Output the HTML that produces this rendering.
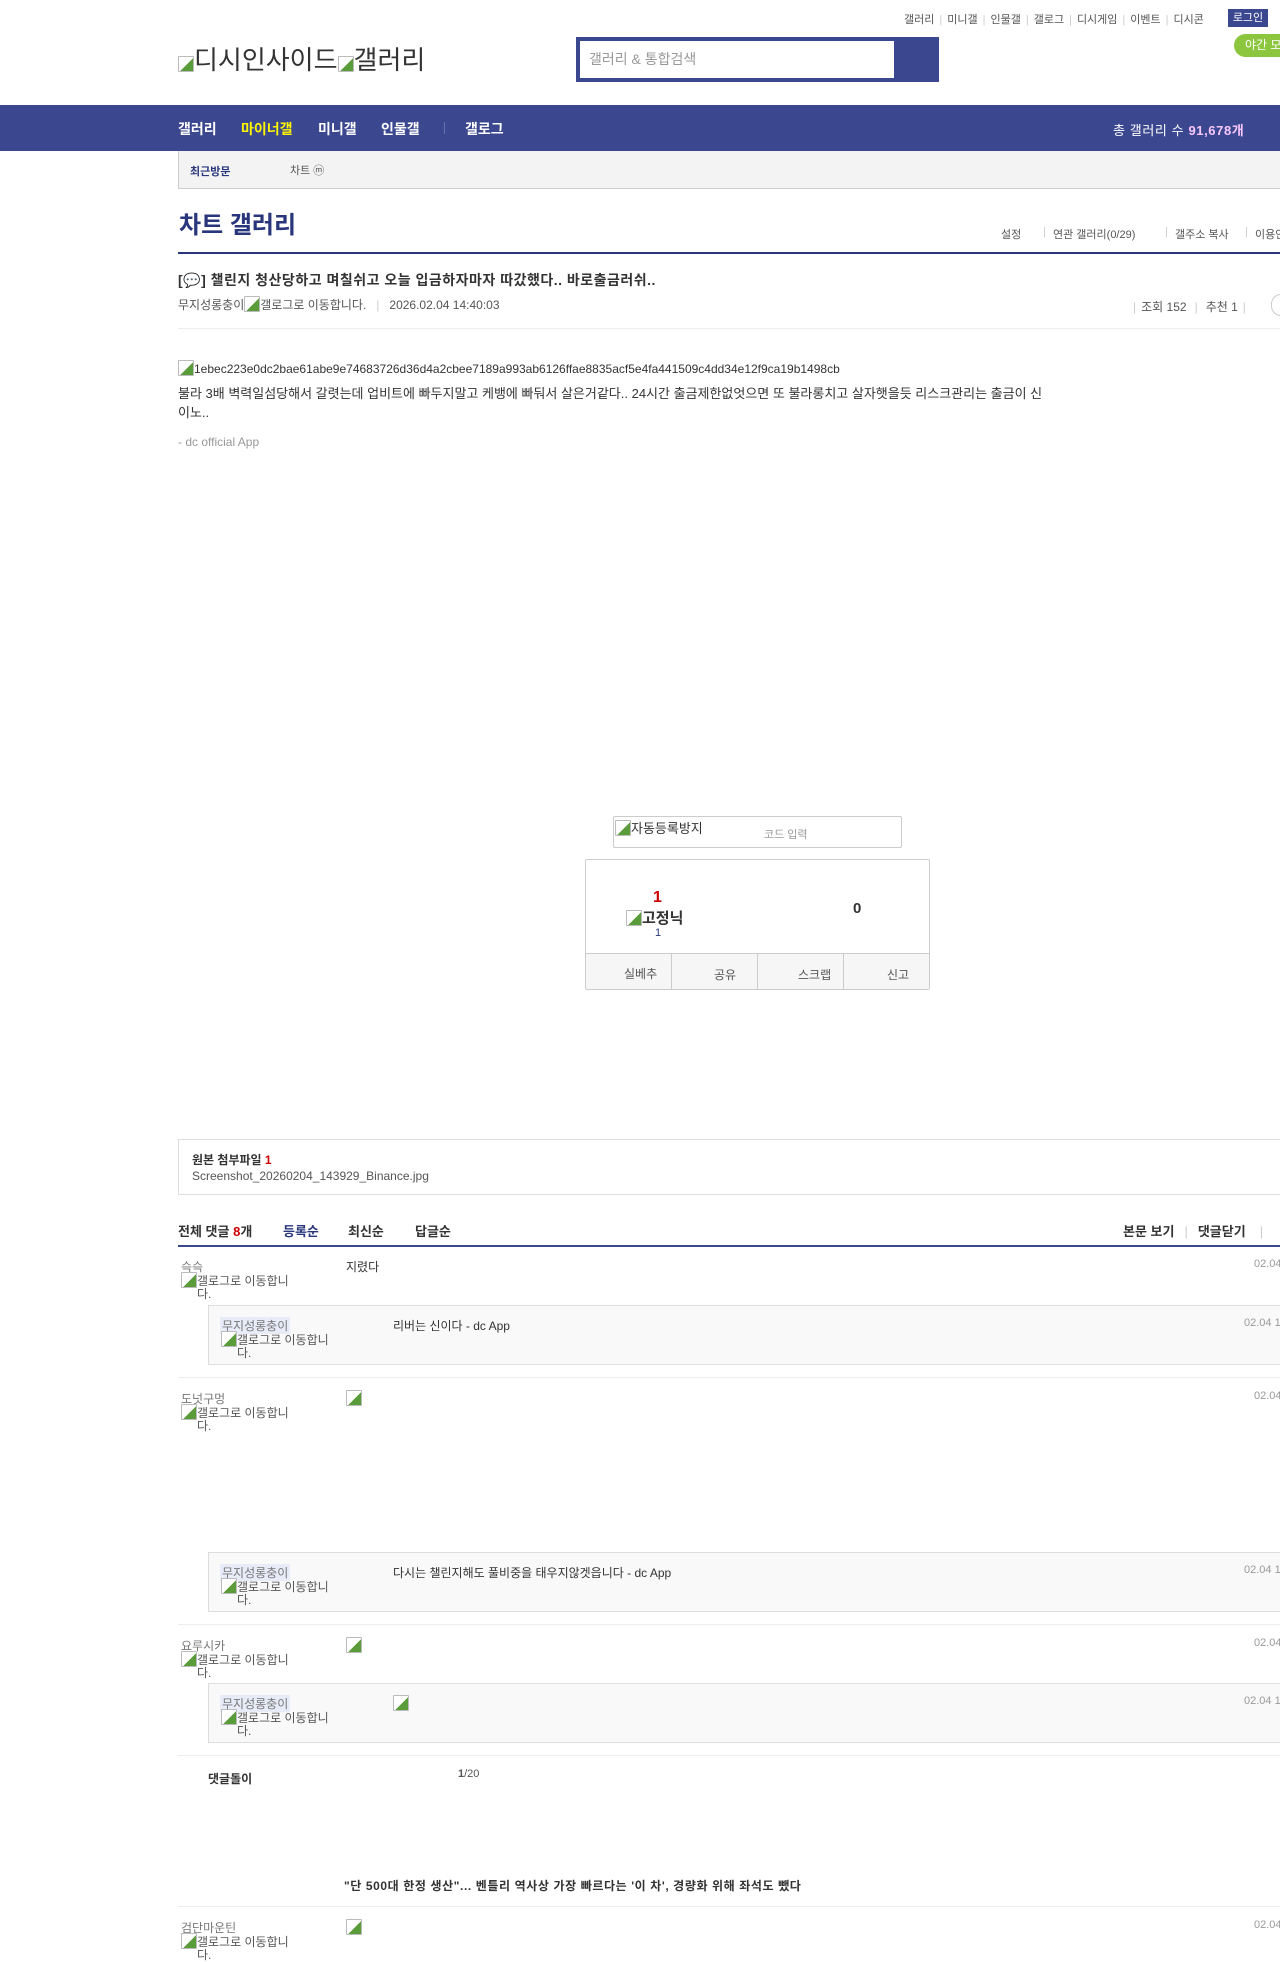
<!DOCTYPE html>
<html><head><meta charset="utf-8">
<style>
*{margin:0;padding:0;box-sizing:border-box}
body{width:1280px;height:1957px;position:relative;overflow:hidden;background:#fff;font-family:"Liberation Sans","Noto Sans CJK KR",sans-serif;color:#333;font-size:12px}
.a{position:absolute;white-space:nowrap}
.tl span.s{color:#ccc;margin:0 5px}
.rep{position:absolute;left:208px;width:1100px;background:#f9f9f9;border:1px solid #ddd}
.hr{position:absolute;left:178px;width:1110px;height:1px;background:#eee}
.nick{color:#777;font-size:12px}
.nick2{color:#777;background:#e8ecf8;font-size:12px;padding:0 2px}
.gl{font-size:12px;color:#555;line-height:13px;width:112px;white-space:normal;word-break:break-all;padding-left:16px;text-indent:-16px}
.bi{display:inline-block;width:16px;height:16px;border:1px solid #bbb;border-radius:1px;vertical-align:-3px;background:linear-gradient(135deg,#fff 55%,#5a9c3a 55%)}
</style></head><body>

<div class="a tl" style="left:904px;top:11px;font-size:11px;color:#555">갤러리<span class="s">|</span>미니갤<span class="s">|</span>인물갤<span class="s">|</span>갤로그<span class="s">|</span>디시게임<span class="s">|</span>이벤트<span class="s">|</span>디시콘</div>
<div class="a" style="left:1228px;top:9px;width:40px;height:18px;background:#3b4890;color:#fff;font-size:11px;line-height:18px;text-align:center">로그인</div>
<div class="a" style="left:1234px;top:34px;width:60px;height:23px;background:#8cc63e;color:#fff;border-radius:12px;font-size:12px;line-height:23px;padding-left:11px">야간 모드</div>

<div class="a" style="left:178px;top:40px;font-size:26px;color:#333"><span class="bi"></span>디시인사이드<span class="bi"></span>갤러리</div>

<div class="a" style="left:576px;top:37px;width:363px;height:45px;background:#3b4890"></div>
<div class="a" style="left:580px;top:41px;width:314px;height:37px;background:#fff;color:#999;font-size:14px;line-height:37px;padding-left:9px">갤러리 &amp; 통합검색</div>

<div class="a" style="left:0;top:105px;width:1280px;height:46px;background:#3b4890"></div>
<div class="a" style="left:178px;top:119px;font-size:14px;font-weight:bold;color:#fff">갤러리</div>
<div class="a" style="left:241px;top:119px;font-size:14px;font-weight:bold;color:#fef500">마이너갤</div>
<div class="a" style="left:318px;top:119px;font-size:14px;font-weight:bold;color:#fff">미니갤</div>
<div class="a" style="left:381px;top:119px;font-size:14px;font-weight:bold;color:#fff">인물갤</div>
<div class="a" style="left:444px;top:122px;width:1px;height:12px;background:#6570aa"></div>
<div class="a" style="left:465px;top:119px;font-size:14px;font-weight:bold;color:#fff">갤로그</div>
<div class="a" style="left:1113px;top:120px;font-size:13px;color:#fff;letter-spacing:0.6px">총 갤러리 수 <b style="color:#f9c7ff">91,678개</b></div>

<div class="a" style="left:178px;top:151px;width:1110px;height:38px;background:#f3f3f3;border-left:1px solid #ccc;border-bottom:1px solid #ccc"></div>
<div class="a" style="left:190px;top:163px;font-size:11px;font-weight:bold;color:#29367c">최근방문</div>
<div class="a" style="left:290px;top:162px;font-size:11px;color:#555">차트 ⓜ</div>

<div class="a" style="left:179px;top:205px;font-size:24px;font-weight:bold;color:#29367c">차트 갤러리</div>
<div class="a" style="left:1001px;top:226px;font-size:11px;color:#555">설정</div>
<div class="a" style="left:1043px;top:226px;font-size:11px;color:#ccc">|</div>
<div class="a" style="left:1053px;top:226px;font-size:11px;color:#555">연관 갤러리(0/29)</div>
<div class="a" style="left:1165px;top:226px;font-size:11px;color:#ccc">|</div>
<div class="a" style="left:1175px;top:226px;font-size:11px;color:#555">갤주소 복사</div>
<div class="a" style="left:1245px;top:226px;font-size:11px;color:#ccc">|</div>
<div class="a" style="left:1255px;top:226px;font-size:11px;color:#555">이용안내</div>
<div class="a" style="left:178px;top:252px;width:1110px;height:2px;background:#29367c"></div>

<div class="a" style="left:178px;top:270px;font-size:14px;font-weight:bold;color:#333;letter-spacing:0.5px">[💬] 챌린지 청산당하고 며칠쉬고 오늘 입금하자마자 따갔했다.. 바로출금러쉬..</div>
<div class="a" style="left:178px;top:296px;font-size:12px;color:#555">무지성롱충이<span class="bi"></span>갤로그로 이동합니다.<span style="color:#ccc;margin:0 10px">|</span>2026.02.04 14:40:03</div>
<div class="a tl" style="left:1128px;top:298px;font-size:12px;color:#555"><span class="s">|</span>조회 152<span class="s" style="margin:0 8px">|</span>추천 1<span class="s">|</span></div>
<div class="a" style="left:1271px;top:294px;width:20px;height:22px;border:1px solid #ccc;border-radius:11px"></div>
<div class="a" style="left:178px;top:328px;width:1110px;height:1px;background:#eee"></div>

<div class="a" style="left:178px;top:360px;font-size:12px;color:#333"><span class="bi"></span>1ebec223e0dc2bae61abe9e74683726d36d4a2cbee7189a993ab6126ffae8835acf5e4fa441509c4dd34e12f9ca19b1498cb</div>
<div class="a" style="left:178px;top:384px;font-size:13px;line-height:19px;color:#333;white-space:normal;width:872px;word-break:break-all">불라 3배 벽력일섬당해서 갈렷는데 업비트에 빠두지말고 케뱅에 빠둬서 살은거같다.. 24시간 출금제한없엇으면 또 불라롱치고 살자햇을듯 리스크관리는 출금이 신이노..</div>
<div class="a" style="left:178px;top:435px;font-size:12px;color:#999">- dc official App</div>

<div class="a" style="left:613px;top:816px;width:289px;height:32px;border:1px solid #ccc;border-radius:2px"></div>
<div class="a" style="left:615px;top:818px;font-size:13px;color:#333"><span class="bi"></span>자동등록방지</div>
<div class="a" style="left:764px;top:826px;font-size:11px;color:#999">코드 입력</div>

<div class="a" style="left:585px;top:859px;width:345px;height:131px;border:1px solid #ccc;border-radius:2px"></div>
<div class="a" style="left:653px;top:889px;font-size:16px;font-weight:bold;color:#c00">1</div>
<div class="a" style="left:626px;top:907px;font-size:15px;font-weight:bold;color:#333"><span class="bi"></span>고정닉</div>
<div class="a" style="left:655px;top:927px;font-size:11px;color:#29367c">1</div>
<div class="a" style="left:853px;top:900px;font-size:15px;font-weight:bold;color:#333">0</div>
<div class="a" style="left:586px;top:953px;width:343px;height:36px;background:#f6f6f6;border-top:1px solid #ccc"></div>
<div class="a" style="left:671px;top:953px;width:1px;height:36px;background:#ccc"></div>
<div class="a" style="left:757px;top:953px;width:1px;height:36px;background:#ccc"></div>
<div class="a" style="left:843px;top:953px;width:1px;height:36px;background:#ccc"></div>
<div class="a" style="left:624px;top:965px;font-size:12px;color:#555">실베추</div>
<div class="a" style="left:714px;top:966px;font-size:12px;color:#555">공유</div>
<div class="a" style="left:798px;top:966px;font-size:12px;color:#555">스크랩</div>
<div class="a" style="left:887px;top:966px;font-size:12px;color:#555">신고</div>

<div class="a" style="left:178px;top:1139px;width:1110px;height:56px;border:1px solid #ddd"></div>
<div class="a" style="left:192px;top:1151px;font-size:12px;font-weight:bold;color:#333">원본 첨부파일 <span style="color:#c00">1</span></div>
<div class="a" style="left:192px;top:1169px;font-size:12px;color:#555">Screenshot_20260204_143929_Binance.jpg</div>

<div class="a" style="left:178px;top:1221px;font-size:13px;font-weight:bold;color:#333">전체 댓글 <span style="color:#c00">8</span>개</div>
<div class="a" style="left:283px;top:1221px;font-size:13px;font-weight:bold;color:#29367c">등록순</div>
<div class="a" style="left:348px;top:1221px;font-size:13px;font-weight:bold;color:#333">최신순</div>
<div class="a" style="left:415px;top:1221px;font-size:13px;font-weight:bold;color:#333">답글순</div>
<div class="a" style="left:1123px;top:1221px;font-size:13px;font-weight:bold;color:#333">본문 보기<span style="color:#ccc;font-weight:normal;margin:0 10px">|</span>댓글닫기<span style="color:#ccc;font-weight:normal;margin:0 14px">|</span></div>
<div class="a" style="left:178px;top:1245px;width:1110px;height:2px;background:#3b4890"></div>

<div class="a nick" style="left:181px;top:1258px">슥슥</div>
<div class="a gl" style="left:181px;top:1272px"><span class="bi"></span>갤로그로 이동합니다.</div>
<div class="a" style="left:346px;top:1258px;font-size:12px;color:#333">지렸다</div>
<div class="a" style="left:1254px;top:1258px;font-size:11px;color:#999">02.04</div>
<div class="rep" style="top:1305px;height:60px"></div>
<div class="a nick2" style="left:220px;top:1317px">무지성롱충이</div>
<div class="a gl" style="left:221px;top:1331px"><span class="bi"></span>갤로그로 이동합니다.</div>
<div class="a" style="left:393px;top:1317px;font-size:12px;color:#333">리버는 신이다 - dc App</div>
<div class="a" style="left:1244px;top:1317px;font-size:11px;color:#999">02.04 1</div>
<div class="hr" style="top:1377px"></div>

<div class="a nick" style="left:181px;top:1390px">도넛구멍</div>
<div class="a gl" style="left:181px;top:1404px"><span class="bi"></span>갤로그로 이동합니다.</div>
<div class="a" style="left:346px;top:1390px"><span class="bi"></span></div>
<div class="a" style="left:1254px;top:1390px;font-size:11px;color:#999">02.04</div>
<div class="rep" style="top:1552px;height:60px"></div>
<div class="a nick2" style="left:220px;top:1564px">무지성롱충이</div>
<div class="a gl" style="left:221px;top:1578px"><span class="bi"></span>갤로그로 이동합니다.</div>
<div class="a" style="left:393px;top:1564px;font-size:12px;color:#333">다시는 챌린지해도 풀비중을 태우지않겟읍니다 - dc App</div>
<div class="a" style="left:1244px;top:1564px;font-size:11px;color:#999">02.04 1</div>
<div class="hr" style="top:1624px"></div>

<div class="a nick" style="left:181px;top:1637px">요루시카</div>
<div class="a gl" style="left:181px;top:1651px"><span class="bi"></span>갤로그로 이동합니다.</div>
<div class="a" style="left:346px;top:1637px"><span class="bi"></span></div>
<div class="a" style="left:1254px;top:1637px;font-size:11px;color:#999">02.04</div>
<div class="rep" style="top:1683px;height:60px"></div>
<div class="a nick2" style="left:220px;top:1695px">무지성롱충이</div>
<div class="a gl" style="left:221px;top:1709px"><span class="bi"></span>갤로그로 이동합니다.</div>
<div class="a" style="left:393px;top:1695px"><span class="bi"></span></div>
<div class="a" style="left:1244px;top:1695px;font-size:11px;color:#999">02.04 1</div>
<div class="hr" style="top:1755px"></div>

<div class="a" style="left:208px;top:1770px;font-size:12px;font-weight:bold;color:#333">댓글돌이</div>
<div class="a" style="left:458px;top:1768px;font-size:11px;color:#555"><b>1</b>/20</div>
<div class="a" style="left:344px;top:1877px;font-size:12px;font-weight:bold;color:#333;letter-spacing:0.6px">"단 500대 한정 생산"... 벤틀리 역사상 가장 빠르다는 '이 차', 경량화 위해 좌석도 뺐다</div>
<div class="hr" style="top:1906px"></div>

<div class="a nick" style="left:181px;top:1919px">검단마운틴</div>
<div class="a gl" style="left:181px;top:1933px"><span class="bi"></span>갤로그로 이동합니다.</div>
<div class="a" style="left:346px;top:1919px"><span class="bi"></span></div>
<div class="a" style="left:1254px;top:1919px;font-size:11px;color:#999">02.04</div>
</body></html>
